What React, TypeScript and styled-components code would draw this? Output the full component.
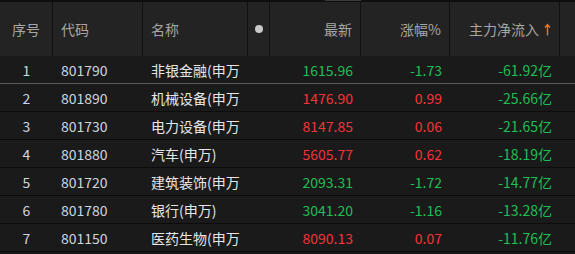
import * as React from 'react'
import styled, { createGlobalStyle } from 'styled-components'

const GlobalStyle = createGlobalStyle`
  html, body {
    margin: 0;
    padding: 0;
    background: #181818;
  }
  body {
    font-family: "Noto Sans CJK SC", "Noto Sans", sans-serif;
    -webkit-font-smoothing: antialiased;
  }
`

const COLS = '53px 90px 105px 22px 91px 89px 110px 15px'

const Table = styled.div`
  width: 575px;
  height: 254px;
  overflow: hidden;
  background: #181818;
`

const HeaderRow = styled.div`
  display: grid;
  grid-template-columns: ${COLS};
  height: 54px;
  border-top: 2px solid #0f0f0f;
  background: #232323;
  position: relative;
`

const ScrollThumb = styled.div`
  position: absolute;
  top: -2px;
  left: 325px;
  width: 36px;
  height: 1px;
  background: #3a3a3a;
`

const HeadCell = styled.div<{ $align?: 'left' | 'right' | 'center' }>`
  display: flex;
  align-items: center;
  justify-content: ${p => p.$align === 'right' ? 'flex-end' : p.$align === 'center' ? 'center' : 'flex-start'};
  padding: 0 8px;
  border-right: 1px solid #111;
  color: #a6a6a6;
  font-size: 14px;
  white-space: nowrap;
  box-sizing: border-box;
`

const DotCell = styled(HeadCell)`
  padding: 0;
`

const Dot = styled.span`
  flex-shrink: 0;
  width: 8px;
  height: 8px;
  border-radius: 50%;
  background: #c8c8c8;
`

const ArrowIcon = styled.svg`
  flex-shrink: 0;
  margin-left: 5px;
  margin-top: 1px;
`

const Row = styled.div<{ $first?: boolean }>`
  display: grid;
  grid-template-columns: ${COLS};
  height: 28px;
  box-sizing: border-box;
  border-bottom: 1px solid ${p => p.$first ? '#5c5c5c' : '#0c0c0c'};
  background: #1a1a1a;
`

const Cell = styled.div<{ $align?: 'left' | 'right' | 'center'; $color?: string }>`
  display: flex;
  align-items: center;
  justify-content: ${p => p.$align === 'right' ? 'flex-end' : p.$align === 'center' ? 'center' : 'flex-start'};
  padding: 0 8px;
  color: ${p => p.$color || '#cdd6e0'};
  font-size: 14px;
  white-space: nowrap;
  overflow: hidden;
  box-sizing: border-box;
`

const NameCell = styled(Cell)`
  padding: 0 8px 0 8px;
  color: #e6e6e6;
`

const NameText = styled.span`
  overflow: hidden;
  white-space: nowrap;
`

const GREEN = '#1fbf55'
const RED = '#f5333a'

interface Item {
  code: string
  name: string
  price: string
  pct: string
  flow: string
}

const rows: Item[] = [
  { code: '801790', name: '非银金融(申万)', price: '1615.96', pct: '-1.73', flow: '-61.92亿' },
  { code: '801890', name: '机械设备(申万)', price: '1476.90', pct: '0.99', flow: '-25.66亿' },
  { code: '801730', name: '电力设备(申万)', price: '8147.85', pct: '0.06', flow: '-21.65亿' },
  { code: '801880', name: '汽车(申万)', price: '5605.77', pct: '0.62', flow: '-18.19亿' },
  { code: '801720', name: '建筑装饰(申万)', price: '2093.31', pct: '-1.72', flow: '-14.77亿' },
  { code: '801780', name: '银行(申万)', price: '3041.20', pct: '-1.16', flow: '-13.28亿' },
  { code: '801150', name: '医药生物(申万)', price: '8090.13', pct: '0.07', flow: '-11.76亿' },
]

const tone = (v: string) => (v.startsWith('-') ? GREEN : RED)

const SortArrow = () => (
  <ArrowIcon width="7" height="13" viewBox="0 0 7 13">
    <path d="M3.5 1.5V12.5M1 4.5L3.5 1.5L6 4.5" stroke="#f07414" strokeWidth="1.4" fill="none"/>
  </ArrowIcon>
)

export default class App extends React.Component {
  render () {
    return <Table>
      <GlobalStyle/>
      <HeaderRow>
        <ScrollThumb/>
        <HeadCell $align="center">序号</HeadCell>
        <HeadCell>代码</HeadCell>
        <HeadCell>名称</HeadCell>
        <DotCell $align="center"><Dot/></DotCell>
        <HeadCell $align="right">最新</HeadCell>
        <HeadCell $align="right">涨幅%</HeadCell>
        <HeadCell $align="right">主力净流入<SortArrow/></HeadCell>
        <HeadCell/>
      </HeaderRow>
      {rows.map((r, i) => (
        <Row key={r.code} $first={i === 0}>
          <Cell $align="center">{i + 1}</Cell>
          <Cell>{r.code}</Cell>
          <NameCell><NameText>{r.name}</NameText></NameCell>
          <Cell/>
          <Cell $align="right" $color={tone(r.pct)}>{r.price}</Cell>
          <Cell $align="right" $color={tone(r.pct)}>{r.pct}</Cell>
          <Cell $align="right" $color={tone(r.flow)}>{r.flow}</Cell>
          <Cell/>
        </Row>
      ))}
    </Table>
  }
}
